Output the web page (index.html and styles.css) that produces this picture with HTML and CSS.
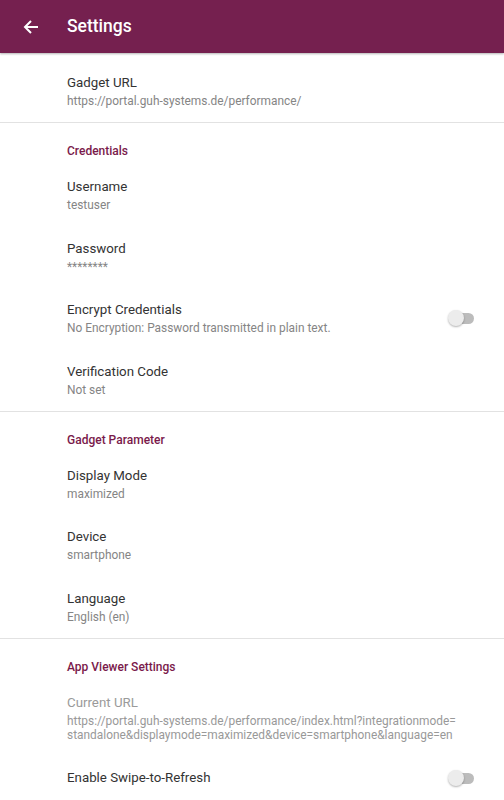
FILE: index.html
```html
<!doctype html>
<html lang="en">
<head>
	<meta charset="UTF-8">
	<title>Settings</title>
	<link rel="stylesheet" href="styles.css">
</head>
<body>
	<div class="toolbar">
		<svg class="back" width="16" height="16" viewBox="0 0 16 16"><path d="M15 8H2M8 2L2 8l6 6" fill="none" stroke="#fff" stroke-width="2"/></svg>
		<span class="title">Settings</span>
	</div>
	<div class="list">
		<div class="item">
			<div class="item-title">Gadget URL</div>
			<div class="item-sum">https://portal.guh-systems.de/performance/</div>
		</div>
		<div class="divider"></div>
		<div class="category">Credentials</div>
		<div class="item">
			<div class="item-title">Username</div>
			<div class="item-sum">testuser</div>
		</div>
		<div class="item">
			<div class="item-title">Password</div>
			<div class="item-sum">********</div>
		</div>
		<div class="item row">
			<div class="text">
				<div class="item-title">Encrypt Credentials</div>
				<div class="item-sum">No Encryption: Password transmitted in plain text.</div>
			</div>
			<div class="switch"><span class="thumb"></span></div>
		</div>
		<div class="item">
			<div class="item-title">Verification Code</div>
			<div class="item-sum">Not set</div>
		</div>
		<div class="divider"></div>
		<div class="category">Gadget Parameter</div>
		<div class="item">
			<div class="item-title">Display Mode</div>
			<div class="item-sum">maximized</div>
		</div>
		<div class="item">
			<div class="item-title">Device</div>
			<div class="item-sum">smartphone</div>
		</div>
		<div class="item">
			<div class="item-title">Language</div>
			<div class="item-sum">English (en)</div>
		</div>
		<div class="divider"></div>
		<div class="category">App Viewer Settings</div>
		<div class="item disabled">
			<div class="item-title">Current URL</div>
			<div class="item-sum">https://portal.guh-systems.de/performance/index.html?integrationmode=<br>standalone&amp;displaymode=maximized&amp;device=smartphone&amp;language=en</div>
		</div>
		<div class="item row">
			<div class="text">
				<div class="item-title">Enable Swipe-to-Refresh</div>
			</div>
			<div class="switch"><span class="thumb"></span></div>
		</div>
	</div>
</body>
</html>
```
FILE: styles.css
```css
body{
	margin: 0;
	font-family: Roboto, "Liberation Sans", sans-serif;
	background: #fff;
	overflow: hidden;
}
.toolbar{
	height: 53px;
	background: #75204f;
	display: flex;
	align-items: center;
	box-shadow: 0 1px 2px rgba(0,0,0,.3);
	position: relative;
}
.back{
	margin-left: 23px;
}
.title{
	margin-left: 28px;
	color: #fff;
	font-size: 17.5px;
	font-weight: 500;
	margin-bottom: 1px;
}
.list{
	padding-top: 7.5px;
}
.item{
	padding: 13.5px 30px 14px 67px;
}
.item-title{
	font-size: 13.3px;
	line-height: 18px;
	color: #333;
}
.item-sum{
	margin-top: 2px;
	font-size: 11.9px;
	line-height: 14px;
	color: #858585;
}
.disabled .item-title{
	color: #9a9a9a;
}
.disabled .item-sum{
	color: #999;
}
.row{
	display: flex;
	align-items: center;
}
.row .text{
	flex: 1;
}
.divider{
	height: 1px;
	background: #e2e2e2;
}
.category{
	padding: 20px 0 5.5px 67px;
	font-size: 12px;
	line-height: 16px;
	font-weight: 500;
	color: #7a1a4b;
}
.switch{
	position: relative;
	width: 24px;
	height: 11px;
	border-radius: 6px;
	background: #bcbcbc;
	margin-left: 10px;
}
.thumb{
	position: absolute;
	left: -2px;
	top: -3px;
	width: 16px;
	height: 16px;
	border-radius: 50%;
	background: #ececec;
	box-shadow: 0 1px 2px rgba(0,0,0,.3);
}
```
